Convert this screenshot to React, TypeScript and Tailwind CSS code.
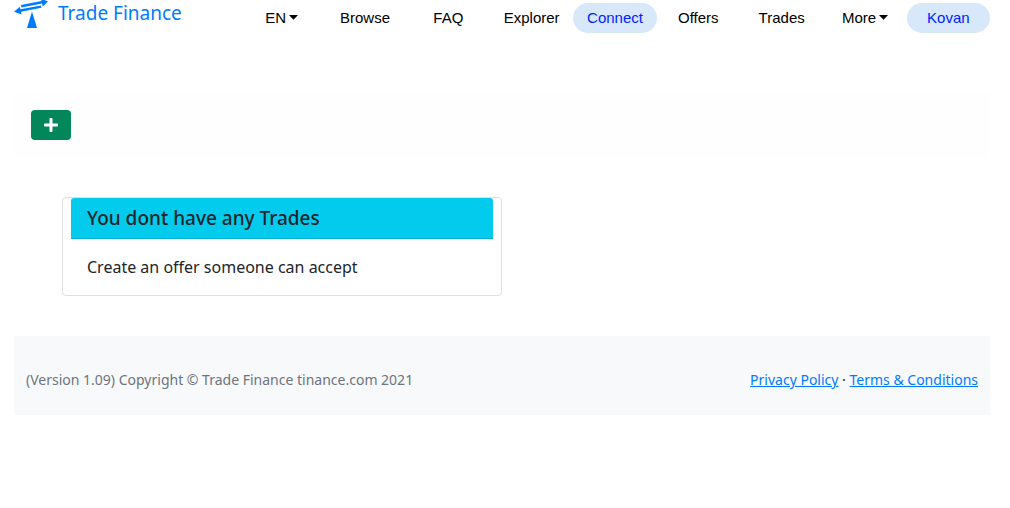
import type { ReactNode } from "react";
import { FaPlus } from "react-icons/fa";

const Caret = () => (
  <svg viewBox="0 0 9 5" className="mb-0.5 h-[5px] w-[9px]" aria-hidden="true">
    <path d="M0 0H9L4.5 4.7Z" fill="currentColor" />
  </svg>
);

function NavLink({ children }: { children: ReactNode }) {
  return (
    <a href="#" className="flex h-[30px] items-center justify-center text-black">
      {children}
    </a>
  );
}

function NavMenu({ label }: { label: string }) {
  return (
    <button type="button" className="flex h-[30px] items-center justify-center gap-[3px] text-black">
      {label}
      <Caret />
    </button>
  );
}

function Pill({ children }: { children: ReactNode }) {
  return (
    <button
      type="button"
      className="flex h-[30px] items-center justify-center rounded-full bg-[#d8e8fb] text-[#001eff]"
    >
      {children}
    </button>
  );
}

function Logo() {
  return (
    <svg viewBox="0 0 34 28" className="h-7 w-[34px]" fill="#007bff" aria-hidden="true">
      <path d="M18 11.5L23 28H13Z" />
      <path d="M7 5L27.5 1L27 -1.5L34 1.6L28.8 6.6L28 3.5L7.4 7.4Z" />
      <path d="M0 11.8L5.8 6.8L6.4 9.2L27 5.4L27.4 7.8L7 11.7L7.5 14.6Z" />
    </svg>
  );
}

export default function App() {
  return (
    <div className="pr-5 pl-3.5 font-['Noto_Sans',sans-serif] text-[#212529]">
      <header className="flex h-[52px] items-start justify-between">
        <a href="#" className="flex items-start gap-2.5 text-[#007bff]">
          <Logo />
          <span className="text-[19px] leading-[26px] whitespace-nowrap">Trade Finance</span>
        </a>
        <nav className="mt-[3px] grid w-[750px] grid-cols-9 font-['Liberation_Sans',sans-serif] text-[15px]">
          <NavMenu label="EN" />
          <NavLink>Browse</NavLink>
          <NavLink>FAQ</NavLink>
          <NavLink>Explorer</NavLink>
          <Pill>Connect</Pill>
          <NavLink>Offers</NavLink>
          <NavLink>Trades</NavLink>
          <NavMenu label="More" />
          <Pill>Kovan</Pill>
        </nav>
      </header>

      <main className="pt-10">
        <div className="rounded bg-[#fefefe] px-[17px] py-[18px]">
          <button
            type="button"
            aria-label="Create trade"
            className="flex h-[30px] w-10 items-center justify-center rounded bg-[#02875a] text-white"
          >
            <FaPlus className="size-4" />
          </button>
        </div>

        <section className="mt-[39px] ml-12 w-[440px] max-w-full rounded border border-[#dfdfdf] px-2">
          <h2 className="rounded-t-[3px] border-b border-[#02b0cf] bg-[#02cbee] px-4 py-2 text-[19px] leading-6 font-medium">
            You dont have any Trades
          </h2>
          <p className="p-4 text-[16px] leading-6">Create an offer someone can accept</p>
        </section>
      </main>

      <footer className="mt-10 flex flex-wrap items-center justify-between bg-[#f8f9fb] px-3 pt-8 pb-[23px] text-sm leading-6">
        <p className="text-[#6c757d]">(Version 1.09) Copyright © Trade Finance tinance.com 2021</p>
        <p>
          <a href="#" className="text-[#007bff] underline">Privacy Policy</a>
          {" · "}
          <a href="#" className="text-[#007bff] underline">Terms &amp; Conditions</a>
        </p>
      </footer>
    </div>
  );
}
